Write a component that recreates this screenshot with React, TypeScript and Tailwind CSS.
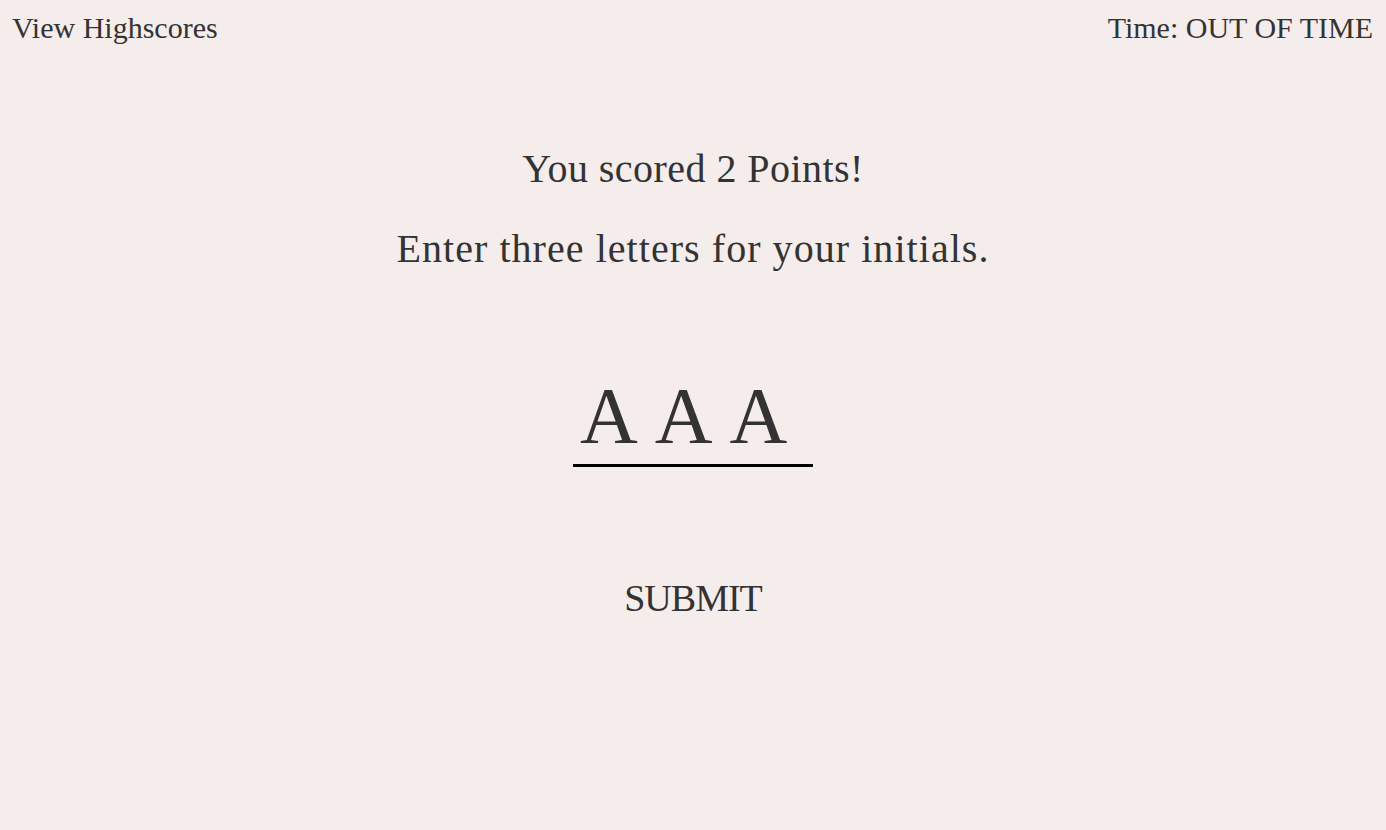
import React from "react";

export default function App() {
  return (
    <div
      className="w-[1386px] h-[830px] bg-[#f5edeb] text-[#333333] flex flex-col"
      style={{ fontFamily: '"Liberation Serif", "Times New Roman", serif' }}
    >
      <div className="flex justify-between items-start pl-[12px] pr-[13px] pt-[11px] text-[30px] leading-[34px]">
        <span>View Highscores</span>
        <span>Time: OUT OF TIME</span>
      </div>
      <div className="flex flex-col items-center">
        <p className="mt-[101px] text-[40px] leading-[46px] tracking-[0.45px]">You scored 2 Points!</p>
        <p className="mt-[34px] text-[40px] leading-[46px] tracking-[1.05px]">Enter three letters for your initials.</p>
        <div className="mt-[98px] w-[240px] border-b-[3px] border-black pb-[2px] pl-[7px] flex gap-[17px] text-[80px] leading-[92px]">
          <span>A</span>
          <span>A</span>
          <span>A</span>
        </div>
        <button className="mt-[109px] text-[38px] leading-[44px] tracking-[-1px] text-[#333333]">SUBMIT</button>
      </div>
    </div>
  );
}
